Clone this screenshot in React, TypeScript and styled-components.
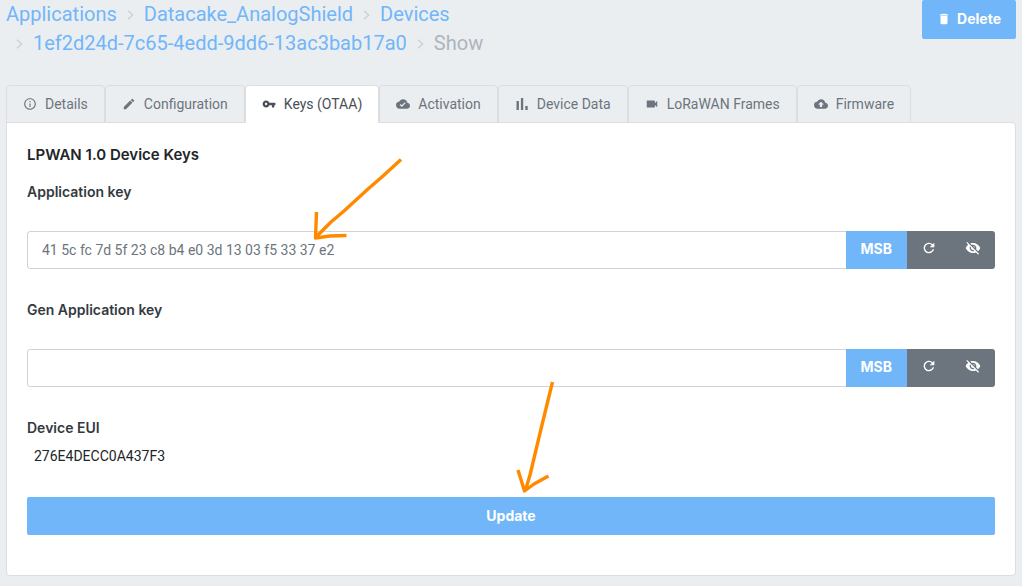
import React, { useState } from 'react';
import styled, { createGlobalStyle, css } from 'styled-components';
import {
  MdCloudDone,
  MdCloudUpload,
  MdDelete,
  MdEdit,
  MdInfoOutline,
  MdRefresh,
  MdVideocam,
  MdVisibilityOff,
  MdVpnKey,
} from 'react-icons/md';

const blue = '#71b6f9';
const slate = '#6c757d';
const line = '#dcdddf';
const strong = 'Inter, Roboto, sans-serif';

const GlobalStyle = createGlobalStyle`
  *, *::before, *::after { box-sizing: border-box; }
  body {
    margin: 0;
    background: #ebeef1;
    color: #212529;
    font: 14px/22px Roboto, 'Liberation Sans', sans-serif;
  }
  button, input { font: inherit; }
`;

const Page = styled.div`
  position: relative;
  padding: 0 6px 10px;
`;

const Header = styled.header`
  display: flex;
  justify-content: space-between;
  align-items: flex-start;
  padding-bottom: 27px;
`;

const Crumbs = styled.ol`
  display: flex;
  flex-wrap: wrap;
  width: 75%;
  margin: 0;
  padding: 0;
  list-style: none;
  font-size: 20px;
  line-height: 29px;
`;

const Crumb = styled.li`
  display: flex;
  align-items: center;
  color: #adb5bd;
`;

const CrumbLink = styled.a`
  color: ${blue};
  text-decoration: none;
`;

const Chevron = styled.svg`
  width: 7px;
  height: 10px;
  margin: 0 10px;
  fill: none;
  stroke: #ccd1d6;
  stroke-width: 1.5;
`;

const primary = css`
  border: 0;
  background: ${blue};
  color: #fff;
  font-family: ${strong};
  font-weight: 700;
  cursor: pointer;
`;

const DeleteButton = styled.button`
  ${primary}
  display: flex;
  align-items: center;
  gap: 6px;
  height: 39px;
  padding: 0 15px 2px;
  border-radius: 2px;
`;

const Tabs = styled.nav`
  display: flex;
`;

const Tab = styled.a<{ $active?: boolean }>`
  display: flex;
  align-items: center;
  gap: 8px;
  height: 38px;
  margin-bottom: -1px;
  padding: 0 16px;
  border: 1px solid ${line};
  border-bottom-color: ${p => (p.$active ? '#fff' : line)};
  border-radius: 4px 4px 0 0;
  background: ${p => (p.$active ? '#fff' : 'transparent')};
  color: ${p => (p.$active ? '#495057' : slate)};
  text-decoration: none;
  white-space: nowrap;
  z-index: 1;
`;

const Panel = styled.form`
  display: flex;
  flex-direction: column;
  padding: 20px 20px 40px;
  border: 1px solid ${line};
  border-radius: 0 4px 4px 4px;
  background: #fff;
`;

const Title = styled.h1`
  margin: 0 0 14px;
  font: 600 15px/24px ${strong};
`;

const Field = styled.div`
  display: flex;
  flex-direction: column;
  margin-bottom: 30px;
`;

const Label = styled.label`
  align-self: flex-start;
  color: #343a40;
  font-family: ${strong};
  font-weight: 600;
`;

const InputGroup = styled.div`
  display: flex;
  height: 38px;
  margin-top: 28px;
  border-radius: 3px;
  overflow: hidden;
`;

const KeyInput = styled.input`
  flex: 1;
  min-width: 0;
  padding: 0 14px;
  border: 1px solid #ced4da;
  border-right: 0;
  border-radius: 3px 0 0 3px;
  background: #fff;
  color: ${slate};
  outline: 0;
`;

const OrderButton = styled.button`
  ${primary}
  padding: 0 15px 2px;
`;

const IconButton = styled.button`
  display: flex;
  align-items: center;
  justify-content: center;
  width: 44px;
  padding: 0 0 4px;
  border: 0;
  background: ${slate};
  color: #fff;
  cursor: pointer;
`;

const Value = styled.output`
  margin-top: 6px;
  padding-left: 7px;
`;

const UpdateButton = styled.button`
  ${primary}
  height: 38px;
  border-radius: 2px;
`;

const Annotations = styled.svg`
  position: absolute;
  top: 0;
  left: 0;
  width: 600px;
  height: 500px;
  fill: none;
  stroke: #ff8a00;
  stroke-width: 3.4;
  stroke-linejoin: round;
  pointer-events: none;
`;

const BarsIcon = () => (
  <svg width="14" height="14" viewBox="0 0 14 14" fill="currentColor" aria-hidden="true">
    <path d="M1.5 4h2.4v9H1.5zM5.9 1h2.3v12H5.9zM10.3 9h2.4v4h-2.4z" />
  </svg>
);

const Separator = () => (
  <Chevron viewBox="0 0 7 10" aria-hidden="true">
    <path d="M1 .8 5.6 5 1 9.2" />
  </Chevron>
);

const crumbs = ['Applications', 'Datacake_AnalogShield', 'Devices', '1ef2d24d-7c65-4edd-9dd6-13ac3bab17a0'];

const tabs = [
  { label: 'Details', icon: <MdInfoOutline size={14} /> },
  { label: 'Configuration', icon: <MdEdit size={14} /> },
  { label: 'Keys (OTAA)', icon: <MdVpnKey size={14} /> },
  { label: 'Activation', icon: <MdCloudDone size={14} /> },
  { label: 'Device Data', icon: <BarsIcon /> },
  { label: 'LoRaWAN Frames', icon: <MdVideocam size={14} /> },
  { label: 'Firmware', icon: <MdCloudUpload size={14} /> },
];

function KeyField({ id, label, initial }: { id: string; label: string; initial: string }) {
  const [value, setValue] = useState(initial);
  return (
    <Field>
      <Label htmlFor={id}>{label}</Label>
      <InputGroup>
        <KeyInput id={id} value={value} onChange={e => setValue(e.target.value)} />
        <OrderButton type="button">MSB</OrderButton>
        <IconButton type="button" aria-label="Generate">
          <MdRefresh size={16} />
        </IconButton>
        <IconButton type="button" aria-label="Hide">
          <MdVisibilityOff size={16} />
        </IconButton>
      </InputGroup>
    </Field>
  );
}

export default function App() {
  return (
    <Page>
      <GlobalStyle />
      <Header>
        <Crumbs>
          {crumbs.map((name, i) => (
            <Crumb key={name}>
              {i > 0 && <Separator />}
              <CrumbLink href="#">{name}</CrumbLink>
            </Crumb>
          ))}
          <Crumb>
            <Separator />
            Show
          </Crumb>
        </Crumbs>
        <DeleteButton type="button">
          <MdDelete size={14} />
          Delete
        </DeleteButton>
      </Header>
      <Tabs>
        {tabs.map(tab => (
          <Tab key={tab.label} href="#" $active={tab.label === 'Keys (OTAA)'}>
            {tab.icon}
            {tab.label}
          </Tab>
        ))}
      </Tabs>
      <Panel onSubmit={e => e.preventDefault()}>
        <Title>LPWAN 1.0 Device Keys</Title>
        <KeyField id="app-key" label="Application key" initial="41 5c fc 7d 5f 23 c8 b4 e0 3d 13 03 f5 33 37 e2" />
        <KeyField id="gen-app-key" label="Gen Application key" initial="" />
        <Field>
          <Label htmlFor="device-eui">Device EUI</Label>
          <Value id="device-eui">276E4DECC0A437F3</Value>
        </Field>
        <UpdateButton type="submit">Update</UpdateButton>
      </Panel>
      <Annotations viewBox="0 0 600 500" aria-hidden="true">
        <path d="M401 159.500 383 176 368 189 344 211 331 222 316 237M316.500 212 315.500 238 330 236 346.500 235.500" />
        <path d="M552.500 382 541 429 530 475 525.500 490M518 470 524.500 491 534 484 548.500 476" />
      </Annotations>
    </Page>
  );
}
